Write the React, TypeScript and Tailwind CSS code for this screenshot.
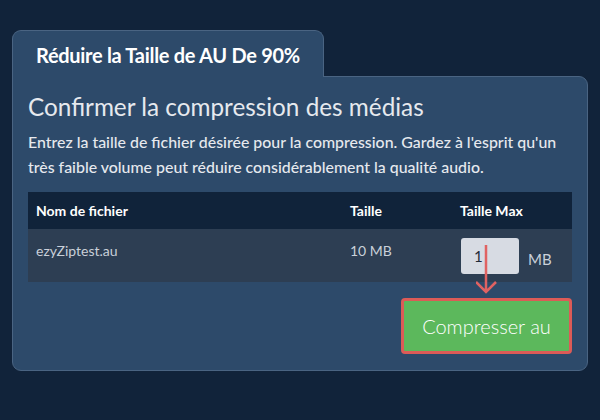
export default function App() {
  return (
    <div className="w-[600px] h-[420px] bg-[#11233a] pt-[30px] px-[12px] font-['Lato','Liberation_Sans',sans-serif]">
      <div className="w-[576px]">
        <div className="relative z-10 w-[312px] h-[47px] -mb-px rounded-t-[9px] border border-b-0 border-[#4a6482] bg-[#2d4a6a] pl-[23px] pt-[11px]">
          <span className="text-[20px] leading-[26px] font-bold text-white tracking-[-0.3px]">Réduire la Taille de AU De 90%</span>
        </div>
        <div className="h-[295px] rounded-b-[9px] rounded-tr-[9px] border border-[#4a6482] bg-[#2d4a6a] px-[15px] pt-[14px]">
          <h2 className="text-[24.3px] leading-[32px] text-[#e6e9ee]">Confirmer la compression des médias</h2>
          <p className="mt-[6px] text-[15.9px] leading-[25px] font-medium text-[#e6e9ee]">
            Entrez la taille de fichier désirée pour la compression. Gardez à l'esprit qu'un très faible volume peut réduire considérablement la qualité audio.
          </p>
          <div className="mt-[13px] w-[544px]">
            <div className="flex h-[37px] items-center bg-[#10233a] text-[14px] font-bold text-white">
              <div className="w-[322px] pl-[8px]">Nom de fichier</div>
              <div className="w-[110px]">Taille</div>
              <div>Taille Max</div>
            </div>
            <div className="flex h-[53px] bg-[#2d3e53] text-[14px] text-[#c9d0d9]">
              <div className="w-[322px] pl-[8px] pt-[11px]">ezyZiptest.au</div>
              <div className="w-[111px] pt-[11px]">10 MB</div>
              <div className="relative flex items-start pt-[9px]">
                <div className="h-[36px] w-[58px] rounded-[3px] bg-[#d7dbe3] pl-[13px] pt-[7px] text-[15px] text-[#1e2a38]">1</div>
                <span className="ml-[9px] mt-[10px] text-[15px] text-[#c9d0d9]">MB</span>
                <svg className="absolute left-[15px] top-[15px]" width="30" height="52" viewBox="0 0 30 52">
                  <path d="M10 1 V48 M0 38 L10 48 L20 38" fill="none" stroke="#e06262" strokeWidth="2.5" />
                </svg>
              </div>
            </div>
          </div>
          <div className="mt-[16px] flex justify-end w-[544px]">
            <button className="h-[56px] w-[171px] rounded-[4px] border-[3px] border-[#dc5b57] bg-[#5cb85c] text-[20px] font-light text-white">
              Compresser au
            </button>
          </div>
        </div>
      </div>
    </div>
  );
}
